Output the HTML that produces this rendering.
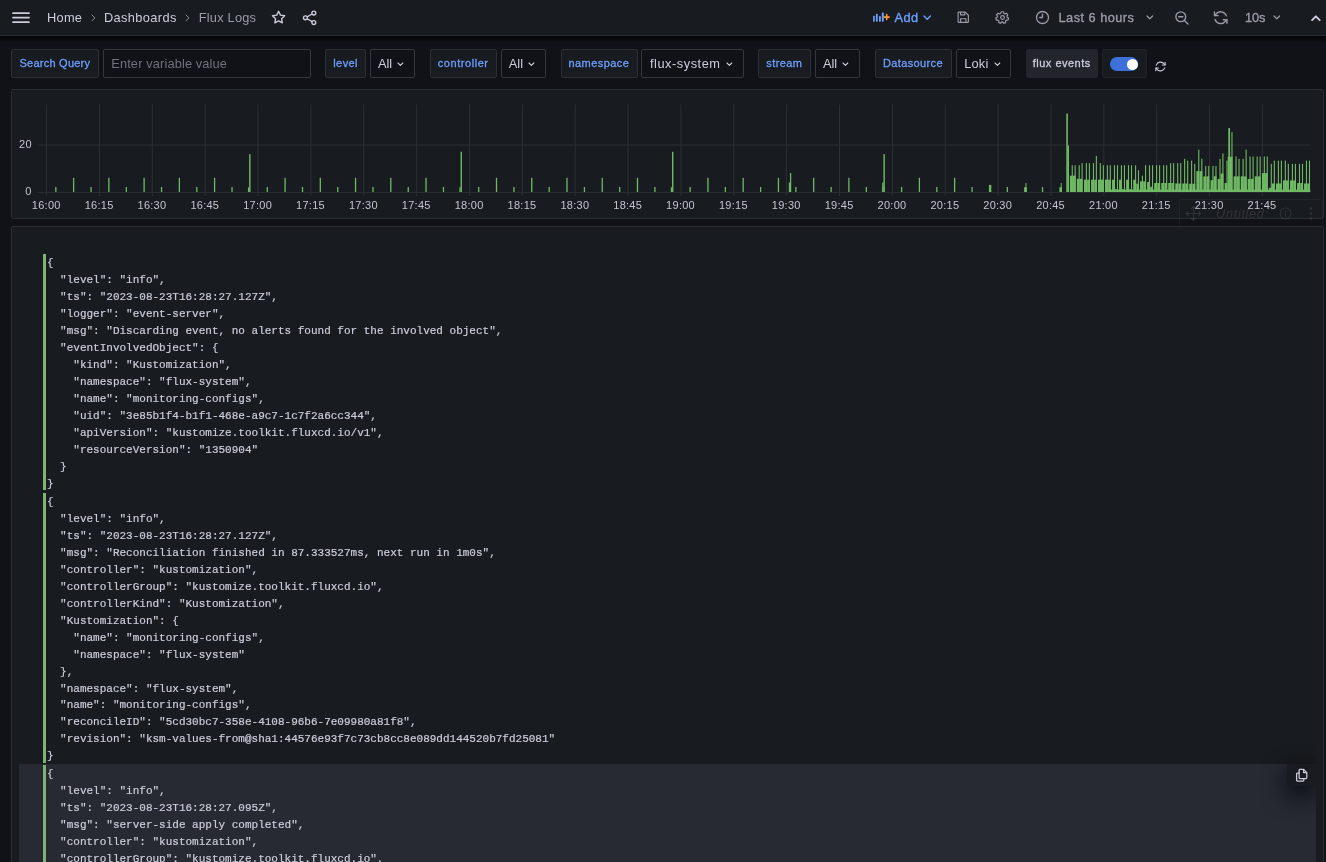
<!DOCTYPE html>
<html lang="en"><head><meta charset="utf-8"><title>Flux Logs - Dashboards - Grafana</title>
<style>
html,body{margin:0;padding:0}
body{width:1326px;height:862px;overflow:hidden;background:#111217;font-family:"Liberation Sans",sans-serif;color:#ccccdc;position:relative;font-size:12.6px;will-change:transform}
.t{position:absolute;white-space:pre;line-height:20px;height:20px}
.ic{position:absolute;overflow:visible}
.abs{position:absolute;box-sizing:border-box}
.topbar{left:0;top:0;width:1326px;height:36px;background:#181b1f;border-bottom:1px solid #2a2d33}
.lbl{background:#181b1f;border:1px solid #2c2f35;border-radius:2px}
.sel{background:#111217;border:1px solid #35373e;border-radius:2px}
.panel{background:#181b1f;border:1px solid #2a2d32;border-radius:2px}
.mono{font-family:"Liberation Mono",monospace;font-size:11px;line-height:16.96px;color:#ccccdc;white-space:pre;margin:0}
.row{position:absolute;left:19px;width:1297px;box-sizing:border-box}
.row .bar{position:absolute;left:24px;top:1px;bottom:1.5px;width:3px;background:#7eb56e}
.row pre{position:absolute;left:27.9px;-webkit-text-stroke:0.2px #ccccdc}
</style></head><body>

<header class="abs topbar">
<svg class="ic" style="left:12.00px;top:11.50px" width="18.00" height="11.00" viewBox="0 0 18 11" ><path d="M1 1.2H17M1 5.6H17M1 10H17" stroke="#ccccdc" stroke-width="1.750" stroke-linecap="round" fill="none"/></svg>
<span class="t " style="left:47.00px;top:7.60px;font-size:12.8px;color:#ccccdc;letter-spacing:0.285px;">Home</span>
<svg class="ic" style="left:91.15px;top:14.40px" width="4.90" height="7.80" viewBox="-1 -1 4.9 7.8"><path d="M0 0 L2.9 2.9 L0 5.8" fill="none" stroke="#8e8e9b" stroke-width="1.0" stroke-linecap="round" stroke-linejoin="round"/></svg>
<span class="t " style="left:104.00px;top:7.60px;font-size:12.8px;color:#ccccdc;letter-spacing:0.365px;">Dashboards</span>
<svg class="ic" style="left:185.25px;top:14.40px" width="4.90" height="7.80" viewBox="-1 -1 4.9 7.8"><path d="M0 0 L2.9 2.9 L0 5.8" fill="none" stroke="#8e8e9b" stroke-width="1.0" stroke-linecap="round" stroke-linejoin="round"/></svg>
<span class="t " style="left:198.70px;top:7.60px;font-size:12.8px;color:#9a9aa8;letter-spacing:0.226px;">Flux Logs</span>
<svg class="ic" style="left:270.15px;top:8.90px" width="17.20" height="17.20" viewBox="0 0 24 24" ><path d="M12 3.2l2.6 5.4 5.9.8-4.3 4.1 1 5.9-5.2-2.8-5.2 2.8 1-5.9L3.500 9.400l5.900-.8z" fill="none" stroke="#ccccdc" stroke-width="1.9" stroke-linejoin="round"/></svg>
<svg class="ic" style="left:301.30px;top:8.75px" width="17.60" height="17.60" viewBox="0 0 24 24" ><g fill="none" stroke="#ccccdc" stroke-width="1.9"><circle cx="17.5" cy="5.5" r="2.6"/><circle cx="6" cy="12" r="2.6"/><circle cx="17.500" cy="18.500" r="2.600"/><path d="M8.300 10.700L15.200 6.800M8.300 13.300L15.200 17.200"/></g></svg>
<svg class="ic" style="left:872.50px;top:12.20px" width="17.00" height="10.00" viewBox="0 0 17 10" ><g fill="#6e9fff"><rect x="0.100" y="3.700" width="1.700" height="6" rx=".6"/><rect x="2.900" y="1.800" width="1.800" height="7.900" rx=".6"/><rect x="6.000" y="4.100" width="1.800" height="5.600" rx=".6"/><rect x="8.800" y="0.500" width="2" height="9.200" rx=".6"/></g><path d="M13.700 2.600v5M11.200 5.100h5" stroke="#ff9830" stroke-width="1.600" stroke-linecap="round"/></svg>
<span class="t " style="left:894.40px;top:7.60px;font-size:12.8px;color:#6e9fff;letter-spacing:0.463px;-webkit-text-stroke:0.35px #6e9fff;">Add</span>
<svg class="ic" style="left:923.20px;top:15.00px" width="8.40" height="5.20" viewBox="-1 -1 8.4 5.2"><path d="M0 0 L3.2 3.2 L6.4 0" fill="none" stroke="#6e9fff" stroke-width="1.4" stroke-linecap="round" stroke-linejoin="round"/></svg>
<svg class="ic" style="left:955.80px;top:10.30px" width="14.50" height="14.50" viewBox="0 0 24 24" ><g fill="none" stroke="#9a9aa8" stroke-width="1.900" stroke-linejoin="round"><path d="M4.500 3.500h10.800l5.200 5.200v10.800a1 1 0 0 1-1 1h-15a1 1 0 0 1-1-1v-15a1 1 0 0 1 1-1z"/><path d="M7.500 3.500v4.500h7v-4.500M7.500 20.500v-6h9v6"/></g></svg>
<svg class="ic" style="left:995.00px;top:10.00px" width="15.00" height="15.00" viewBox="0 0 24 24" ><g fill="none" stroke="#9a9aa8" stroke-width="1.900" stroke-linejoin="round"><circle cx="12" cy="12" r="3"/><path d="M10.300 2.800h3.400l.5 2.600 1.700.9 2.400-1.200 2.200 2.600-1.500 2.100.4 1.900 2.300 1.300-.9 3.200-2.700-.1-1.300 1.400.3 2.700-3.200 1.100-1.500-2.200h-1.800l-1.500 2.200-3.200-1.100.3-2.700-1.300-1.400-2.700.1-.9-3.200 2.300-1.300.4-1.900-1.500-2.100 2.200-2.600 2.400 1.200 1.700-.9z"/></g></svg>
<svg class="ic" style="left:1035.00px;top:10.00px" width="15.00" height="15.00" viewBox="0 0 24 24" ><g fill="none" stroke="#9a9aa8" stroke-width="2.100" stroke-linecap="round" stroke-linejoin="round"><circle cx="12" cy="12" r="9.600"/><path d="M12 6.800V12H7.600"/></g></svg>
<span class="t " style="left:1058.50px;top:7.60px;font-size:12.8px;color:#9a9aa8;letter-spacing:0.460px;-webkit-text-stroke:0.35px #9a9aa8;">Last 6 hours</span>
<svg class="ic" style="left:1146.40px;top:15.20px" width="7.60" height="4.80" viewBox="-1 -1 7.6 4.8"><path d="M0 0 L2.8 2.8 L5.6 0" fill="none" stroke="#9a9aa8" stroke-width="1.2" stroke-linecap="round" stroke-linejoin="round"/></svg>
<svg class="ic" style="left:1173.60px;top:9.80px" width="15.50" height="15.50" viewBox="0 0 24 24" ><g fill="none" stroke="#9a9aa8" stroke-width="2.100" stroke-linecap="round"><circle cx="10.500" cy="10.500" r="7.600"/><path d="M7.200 10.500h6.600M16.200 16.200L21.600 21.600"/></g></svg>
<svg class="ic" style="left:1211.90px;top:8.80px" width="17.40" height="17.40" viewBox="0 0 24 24" ><g fill="none" stroke="#9a9aa8" stroke-width="1.900" stroke-linecap="round" stroke-linejoin="round"><path d="M19.800 9.500A8.300 8.300 0 0 0 5.300 7.200L3.600 9"/><path d="M3.400 4.200V9.200H8.400"/><path d="M4.200 14.500A8.300 8.300 0 0 0 18.700 16.800L20.400 15"/><path d="M20.600 19.800V14.800H15.600"/></g></svg>
<span class="t " style="left:1244.90px;top:7.60px;font-size:12.8px;color:#9a9aa8;letter-spacing:-0.069px;-webkit-text-stroke:0.35px #9a9aa8;">10s</span>
<svg class="ic" style="left:1273.40px;top:15.20px" width="7.60" height="4.80" viewBox="-1 -1 7.6 4.8"><path d="M0 0 L2.8 2.8 L5.6 0" fill="none" stroke="#9a9aa8" stroke-width="1.2" stroke-linecap="round" stroke-linejoin="round"/></svg>
<svg class="ic" style="left:1310px;top:14px" width="12" height="8" viewBox="0 0 12 8"><path d="M2.100 6.100L5.900 2.300L9.700 6.100" fill="none" stroke="#ccccdc" stroke-width="1.900" stroke-linecap="round" stroke-linejoin="round"/></svg>
</header>
<div class="abs" style="left:0;top:36px;width:1326px;height:7px;background:linear-gradient(180deg,rgba(0,0,0,.85) 0%,rgba(0,0,0,.45) 35%,rgba(0,0,0,0) 100%)"></div>
<div class="abs lbl" style="left:11px;top:49px;width:88px;height:29px"></div>
<span class="t " style="left:19.50px;top:53.30px;font-size:11px;color:#6e9fff;letter-spacing:0.240px;-webkit-text-stroke:0.3px #6e9fff;">Search Query</span>
<div class="abs sel" style="left:103px;top:49px;width:207.500px;height:29px"></div>
<span class="t " style="left:111.25px;top:53.60px;font-size:12.8px;color:#70717c;letter-spacing:0.138px;">Enter variable value</span>
<div class="abs lbl" style="left:325px;top:49px;width:40.5px;height:29px"></div>
<span class="t " style="left:333.25px;top:53.30px;font-size:11px;color:#6e9fff;letter-spacing:0.407px;-webkit-text-stroke:0.3px #6e9fff;">level</span>
<div class="abs sel" style="left:369.5px;top:49px;width:45.5px;height:29px"></div>
<span class="t " style="left:378.00px;top:53.60px;font-size:12.8px;color:#ccccdc;letter-spacing:-0.112px;">All</span>
<svg class="ic" style="left:397.30px;top:61.70px" width="6.80" height="4.40" viewBox="-1 -1 6.8 4.4"><path d="M0 0 L2.4 2.4 L4.8 0" fill="none" stroke="#ccccdc" stroke-width="1.1" stroke-linecap="round" stroke-linejoin="round"/></svg>
<div class="abs lbl" style="left:430px;top:49px;width:66.5px;height:29px"></div>
<span class="t " style="left:437.75px;top:53.30px;font-size:11px;color:#6e9fff;letter-spacing:0.557px;-webkit-text-stroke:0.3px #6e9fff;">controller</span>
<div class="abs sel" style="left:500.5px;top:49px;width:45.0px;height:29px"></div>
<span class="t " style="left:508.75px;top:53.60px;font-size:12.8px;color:#ccccdc;letter-spacing:0.013px;">All</span>
<svg class="ic" style="left:527.60px;top:61.70px" width="6.80" height="4.40" viewBox="-1 -1 6.8 4.4"><path d="M0 0 L2.4 2.4 L4.8 0" fill="none" stroke="#ccccdc" stroke-width="1.1" stroke-linecap="round" stroke-linejoin="round"/></svg>
<div class="abs lbl" style="left:561px;top:49px;width:77px;height:29px"></div>
<span class="t " style="left:568.50px;top:53.30px;font-size:11px;color:#6e9fff;letter-spacing:0.423px;-webkit-text-stroke:0.3px #6e9fff;">namespace</span>
<div class="abs sel" style="left:641px;top:49px;width:103px;height:29px"></div>
<span class="t " style="left:650.00px;top:53.60px;font-size:12.8px;color:#ccccdc;letter-spacing:0.528px;">flux-system</span>
<svg class="ic" style="left:726.00px;top:61.70px" width="6.80" height="4.40" viewBox="-1 -1 6.8 4.4"><path d="M0 0 L2.4 2.4 L4.8 0" fill="none" stroke="#ccccdc" stroke-width="1.1" stroke-linecap="round" stroke-linejoin="round"/></svg>
<div class="abs lbl" style="left:758px;top:49px;width:52.5px;height:29px"></div>
<span class="t " style="left:766.25px;top:53.30px;font-size:11px;color:#6e9fff;letter-spacing:0.427px;-webkit-text-stroke:0.3px #6e9fff;">stream</span>
<div class="abs sel" style="left:814.5px;top:49px;width:45.5px;height:29px"></div>
<span class="t " style="left:823.00px;top:53.60px;font-size:12.8px;color:#ccccdc;letter-spacing:-0.112px;">All</span>
<svg class="ic" style="left:842.10px;top:61.70px" width="6.80" height="4.40" viewBox="-1 -1 6.8 4.4"><path d="M0 0 L2.4 2.4 L4.8 0" fill="none" stroke="#ccccdc" stroke-width="1.1" stroke-linecap="round" stroke-linejoin="round"/></svg>
<div class="abs lbl" style="left:874.5px;top:49px;width:77.0px;height:29px"></div>
<span class="t " style="left:883.00px;top:53.30px;font-size:11px;color:#6e9fff;letter-spacing:0.361px;-webkit-text-stroke:0.3px #6e9fff;">Datasource</span>
<div class="abs sel" style="left:955.5px;top:49px;width:55.5px;height:29px"></div>
<span class="t " style="left:964.25px;top:53.60px;font-size:12.8px;color:#ccccdc;letter-spacing:0.173px;">Loki</span>
<svg class="ic" style="left:993.70px;top:61.70px" width="6.80" height="4.40" viewBox="-1 -1 6.8 4.4"><path d="M0 0 L2.4 2.4 L4.8 0" fill="none" stroke="#ccccdc" stroke-width="1.1" stroke-linecap="round" stroke-linejoin="round"/></svg>
<div class="abs" style="left:1026px;top:49px;width:72px;height:29px;background:#22252b;border-radius:2px"></div>
<span class="t " style="left:1032.75px;top:53.30px;font-size:11px;color:#ccccdc;letter-spacing:0.492px;-webkit-text-stroke:0.3px #ccccdc;">flux events</span>
<div class="abs" style="left:1102px;top:49px;width:44.500px;height:29px;background:#181b1f;border:1px solid #1f2227;border-radius:2px"></div>
<div class="abs" style="left:1109.500px;top:56.800px;width:28.800px;height:14.400px;border-radius:8px;background:#3d71d9"></div>
<div class="abs" style="left:1127px;top:58.500px;width:11px;height:11px;border-radius:50%;background:#fff"></div>
<svg class="ic" style="left:1153.70px;top:60.40px" width="13.00" height="13.00" viewBox="0 0 24 24" ><g transform="translate(24,0) scale(-1,1)" fill="none" stroke="#ccccdc" stroke-width="2" stroke-linecap="round" stroke-linejoin="round"><path d="M19.800 9.500A8.300 8.300 0 0 0 5.300 7.200L3.600 9"/><path d="M3.400 4.200V9.200H8.400"/><path d="M4.200 14.500A8.300 8.300 0 0 0 18.700 16.800L20.400 15"/><path d="M20.600 19.800V14.800H15.600"/></g></svg>
<section class="abs panel" style="left:11px;top:89px;width:1313px;height:130px"></section>
<svg class="ic" style="left:0;top:0" width="1326" height="230" viewBox="0 0 1326 230" shape-rendering="auto"><rect x="46.10" y="104.5" width="1" height="91.500" fill="#2c2f34"/><rect x="98.96" y="104.5" width="1" height="91.500" fill="#2c2f34"/><rect x="151.82" y="104.5" width="1" height="91.500" fill="#2c2f34"/><rect x="204.68" y="104.5" width="1" height="91.500" fill="#2c2f34"/><rect x="257.54" y="104.5" width="1" height="91.500" fill="#2c2f34"/><rect x="310.40" y="104.5" width="1" height="91.500" fill="#2c2f34"/><rect x="363.26" y="104.5" width="1" height="91.500" fill="#2c2f34"/><rect x="416.12" y="104.5" width="1" height="91.500" fill="#2c2f34"/><rect x="468.98" y="104.5" width="1" height="91.500" fill="#2c2f34"/><rect x="521.84" y="104.5" width="1" height="91.500" fill="#2c2f34"/><rect x="574.70" y="104.5" width="1" height="91.500" fill="#2c2f34"/><rect x="627.56" y="104.5" width="1" height="91.500" fill="#2c2f34"/><rect x="680.42" y="104.5" width="1" height="91.500" fill="#2c2f34"/><rect x="733.28" y="104.5" width="1" height="91.500" fill="#2c2f34"/><rect x="786.14" y="104.5" width="1" height="91.500" fill="#2c2f34"/><rect x="839.00" y="104.5" width="1" height="91.500" fill="#2c2f34"/><rect x="891.86" y="104.5" width="1" height="91.500" fill="#2c2f34"/><rect x="944.72" y="104.5" width="1" height="91.500" fill="#2c2f34"/><rect x="997.58" y="104.5" width="1" height="91.500" fill="#2c2f34"/><rect x="1050.44" y="104.5" width="1" height="91.500" fill="#2c2f34"/><rect x="1103.30" y="104.5" width="1" height="91.500" fill="#2c2f34"/><rect x="1156.16" y="104.5" width="1" height="91.500" fill="#2c2f34"/><rect x="1209.02" y="104.5" width="1" height="91.500" fill="#2c2f34"/><rect x="1261.88" y="104.5" width="1" height="91.500" fill="#2c2f34"/><rect x="37" y="191.90" width="1273" height="1" fill="#2c2f34"/><rect x="37" y="144.55" width="1273" height="1" fill="#2c2f34"/><g fill="#6fb965"><rect x="55.18" y="187.03" width="1.3" height="4.97"/><rect x="72.98" y="177.79" width="1.3" height="14.21"/><rect x="90.42" y="187.03" width="1.3" height="4.97"/><rect x="108.22" y="177.79" width="1.3" height="14.21"/><rect x="125.66" y="187.03" width="1.3" height="4.97"/><rect x="143.46" y="177.79" width="1.3" height="14.21"/><rect x="160.90" y="187.03" width="1.3" height="4.97"/><rect x="178.70" y="177.79" width="1.3" height="14.21"/><rect x="196.14" y="187.03" width="1.3" height="4.97"/><rect x="213.94" y="177.79" width="1.3" height="14.21"/><rect x="231.38" y="187.03" width="1.3" height="4.97"/><rect x="249.13" y="154.12" width="1.4" height="37.88"/><rect x="247.95" y="187.26" width="1.3" height="4.74"/><rect x="266.62" y="187.03" width="1.3" height="4.97"/><rect x="284.42" y="177.79" width="1.3" height="14.21"/><rect x="301.86" y="187.03" width="1.3" height="4.97"/><rect x="319.66" y="177.79" width="1.3" height="14.21"/><rect x="337.10" y="187.03" width="1.3" height="4.97"/><rect x="354.90" y="177.79" width="1.3" height="14.21"/><rect x="372.34" y="187.03" width="1.3" height="4.97"/><rect x="390.14" y="177.79" width="1.3" height="14.21"/><rect x="407.58" y="187.03" width="1.3" height="4.97"/><rect x="425.38" y="177.79" width="1.3" height="14.21"/><rect x="442.82" y="187.03" width="1.3" height="4.97"/><rect x="460.57" y="151.75" width="1.4" height="40.25"/><rect x="459.39" y="187.26" width="1.3" height="4.74"/><rect x="478.06" y="187.03" width="1.3" height="4.97"/><rect x="495.86" y="177.79" width="1.3" height="14.21"/><rect x="513.30" y="187.03" width="1.3" height="4.97"/><rect x="531.10" y="177.79" width="1.3" height="14.21"/><rect x="548.54" y="187.03" width="1.3" height="4.97"/><rect x="566.34" y="177.79" width="1.3" height="14.21"/><rect x="583.78" y="187.03" width="1.3" height="4.97"/><rect x="601.58" y="177.79" width="1.3" height="14.21"/><rect x="619.02" y="187.03" width="1.3" height="4.97"/><rect x="636.82" y="177.79" width="1.3" height="14.21"/><rect x="654.26" y="187.03" width="1.3" height="4.97"/><rect x="672.01" y="151.75" width="1.4" height="40.25"/><rect x="670.83" y="187.26" width="1.3" height="4.74"/><rect x="689.50" y="187.03" width="1.3" height="4.97"/><rect x="707.30" y="177.79" width="1.3" height="14.21"/><rect x="724.74" y="187.03" width="1.3" height="4.97"/><rect x="742.54" y="177.79" width="1.3" height="14.21"/><rect x="759.98" y="187.03" width="1.3" height="4.97"/><rect x="777.78" y="177.79" width="1.3" height="14.21"/><rect x="795.22" y="187.03" width="1.3" height="4.97"/><rect x="813.02" y="177.79" width="1.3" height="14.21"/><rect x="830.46" y="187.03" width="1.3" height="4.97"/><rect x="848.26" y="177.79" width="1.3" height="14.21"/><rect x="865.70" y="187.03" width="1.3" height="4.97"/><rect x="883.45" y="154.12" width="1.4" height="37.88"/><rect x="882.27" y="187.26" width="1.3" height="4.74"/><rect x="900.94" y="187.03" width="1.3" height="4.97"/><rect x="918.74" y="177.79" width="1.3" height="14.21"/><rect x="936.18" y="187.03" width="1.3" height="4.97"/><rect x="953.98" y="177.79" width="1.3" height="14.21"/><rect x="971.42" y="187.03" width="1.3" height="4.97"/><rect x="1006.66" y="187.03" width="1.3" height="4.97"/><rect x="1041.90" y="187.03" width="1.3" height="4.97"/><rect x="789.94" y="173.06" width="1.3" height="18.94"/><rect x="788.81" y="182.53" width="1.3" height="9.47"/><rect x="882.20" y="182.53" width="1.3" height="9.47"/><rect x="988.90" y="184.90" width="2.4" height="7.10"/><rect x="1024.10" y="187.26" width="2.8" height="4.74"/><rect x="1025.50" y="183.00" width="1.0" height="9.00"/><rect x="1059.40" y="187.26" width="2.6" height="4.74"/><rect x="1060.70" y="183.00" width="1.0" height="9.00"/><rect x="1066.30" y="113.52" width="1.6" height="78.48"/><rect x="1067.60" y="145.60" width="1.4" height="46.40"/><rect x="1071.69" y="165.25" width="1.1" height="26.75"/><rect x="1074.59" y="165.25" width="1.1" height="26.75"/><rect x="1078.65" y="165.25" width="1.1" height="26.75"/><rect x="1081.55" y="163.12" width="1.1" height="28.88"/><rect x="1085.84" y="163.12" width="1.1" height="28.88"/><rect x="1088.86" y="163.12" width="1.1" height="28.88"/><rect x="1092.92" y="163.12" width="1.1" height="28.88"/><rect x="1095.82" y="156.01" width="1.1" height="35.99"/><rect x="1099.77" y="163.12" width="1.1" height="28.88"/><rect x="1102.78" y="165.25" width="1.1" height="26.75"/><rect x="1106.84" y="165.25" width="1.1" height="26.75"/><rect x="1109.74" y="165.25" width="1.1" height="26.75"/><rect x="1113.92" y="165.25" width="1.1" height="26.75"/><rect x="1116.93" y="165.25" width="1.1" height="26.75"/><rect x="1120.88" y="165.25" width="1.1" height="26.75"/><rect x="1123.90" y="165.25" width="1.1" height="26.75"/><rect x="1127.96" y="165.25" width="1.1" height="26.75"/><rect x="1130.97" y="165.25" width="1.1" height="26.75"/><rect x="1135.03" y="165.25" width="1.1" height="26.75"/><rect x="1137.93" y="170.22" width="1.1" height="21.78"/><rect x="1141.88" y="175.66" width="1.1" height="16.34"/><rect x="1145.01" y="165.25" width="1.1" height="26.75"/><rect x="1148.95" y="165.25" width="1.1" height="26.75"/><rect x="1151.97" y="165.25" width="1.1" height="26.75"/><rect x="1156.03" y="165.25" width="1.1" height="26.75"/><rect x="1159.05" y="165.25" width="1.1" height="26.75"/><rect x="1163.11" y="165.25" width="1.1" height="26.75"/><rect x="1166.12" y="165.25" width="1.1" height="26.75"/><rect x="1170.07" y="163.12" width="1.1" height="28.88"/><rect x="1173.08" y="163.12" width="1.1" height="28.88"/><rect x="1177.14" y="163.12" width="1.1" height="28.88"/><rect x="1180.16" y="163.12" width="1.1" height="28.88"/><rect x="1184.09" y="158.85" width="1.1" height="33.15"/><rect x="1187.11" y="160.63" width="1.1" height="31.37"/><rect x="1191.05" y="160.63" width="1.1" height="31.37"/><rect x="1194.18" y="163.83" width="1.1" height="28.17"/><rect x="1198.24" y="149.62" width="1.1" height="42.38"/><rect x="1201.26" y="158.85" width="1.1" height="33.15"/><rect x="1205.20" y="165.96" width="1.1" height="26.04"/><rect x="1208.22" y="165.96" width="1.1" height="26.04"/><rect x="1212.40" y="165.96" width="1.1" height="26.04"/><rect x="1215.41" y="165.96" width="1.1" height="26.04"/><rect x="1219.47" y="158.85" width="1.1" height="33.15"/><rect x="1222.37" y="153.41" width="1.1" height="38.59"/><rect x="1226.43" y="160.63" width="1.1" height="31.37"/><rect x="1231.42" y="132.10" width="1.1" height="59.90"/><rect x="1235.48" y="156.49" width="1.1" height="35.51"/><rect x="1238.50" y="158.85" width="1.1" height="33.15"/><rect x="1242.56" y="158.85" width="1.1" height="33.15"/><rect x="1245.58" y="149.62" width="1.1" height="42.38"/><rect x="1249.52" y="156.49" width="1.1" height="35.51"/><rect x="1252.54" y="156.49" width="1.1" height="35.51"/><rect x="1256.60" y="156.49" width="1.1" height="35.51"/><rect x="1259.61" y="156.49" width="1.1" height="35.51"/><rect x="1263.79" y="156.49" width="1.1" height="35.51"/><rect x="1266.69" y="156.49" width="1.1" height="35.51"/><rect x="1270.75" y="163.83" width="1.1" height="28.17"/><rect x="1273.77" y="160.63" width="1.1" height="31.37"/><rect x="1277.83" y="160.63" width="1.1" height="31.37"/><rect x="1280.84" y="160.63" width="1.1" height="31.37"/><rect x="1284.79" y="160.63" width="1.1" height="31.37"/><rect x="1287.80" y="163.83" width="1.1" height="28.17"/><rect x="1291.86" y="163.83" width="1.1" height="28.17"/><rect x="1294.88" y="163.83" width="1.1" height="28.17"/><rect x="1298.94" y="163.83" width="1.1" height="28.17"/><rect x="1301.96" y="163.83" width="1.1" height="28.17"/><rect x="1305.90" y="160.63" width="1.1" height="31.37"/><rect x="1308.92" y="160.63" width="1.1" height="31.37"/><rect x="1228.29" y="128.08" width="1.8" height="63.92"/><rect x="1069.84" y="175.66" width="2.95" height="16.34"/><rect x="1072.94" y="175.66" width="2.75" height="16.34"/><rect x="1076.80" y="178.74" width="2.95" height="13.26"/><rect x="1079.90" y="178.74" width="2.75" height="13.26"/><rect x="1083.99" y="179.69" width="2.95" height="12.31"/><rect x="1087.09" y="179.69" width="2.87" height="12.31"/><rect x="1091.07" y="179.69" width="2.95" height="12.31"/><rect x="1094.17" y="179.69" width="2.75" height="12.31"/><rect x="1097.92" y="179.69" width="2.95" height="12.31"/><rect x="1101.02" y="179.69" width="2.87" height="12.31"/><rect x="1104.99" y="179.69" width="2.95" height="12.31"/><rect x="1108.09" y="179.69" width="2.75" height="12.31"/><rect x="1112.07" y="179.69" width="2.95" height="12.31"/><rect x="1115.17" y="189.16" width="2.87" height="2.84"/><rect x="1119.03" y="179.69" width="2.95" height="12.31"/><rect x="1122.13" y="189.16" width="2.87" height="2.84"/><rect x="1126.11" y="179.69" width="2.95" height="12.31"/><rect x="1129.21" y="189.16" width="2.87" height="2.84"/><rect x="1133.18" y="179.69" width="2.95" height="12.31"/><rect x="1136.28" y="183.71" width="2.75" height="8.29"/><rect x="1140.03" y="181.35" width="2.95" height="10.65"/><rect x="1143.16" y="181.35" width="2.95" height="10.65"/><rect x="1147.10" y="182.06" width="2.95" height="9.94"/><rect x="1150.20" y="186.79" width="2.87" height="5.21"/><rect x="1154.18" y="183.00" width="2.95" height="9.00"/><rect x="1157.28" y="183.00" width="2.87" height="9.00"/><rect x="1161.26" y="183.00" width="2.95" height="9.00"/><rect x="1164.36" y="183.00" width="2.87" height="9.00"/><rect x="1168.22" y="183.00" width="2.95" height="9.00"/><rect x="1171.32" y="183.00" width="2.87" height="9.00"/><rect x="1175.29" y="183.48" width="2.95" height="8.52"/><rect x="1178.39" y="183.48" width="2.87" height="8.52"/><rect x="1182.24" y="183.48" width="2.95" height="8.52"/><rect x="1185.34" y="183.48" width="2.87" height="8.52"/><rect x="1189.20" y="183.71" width="2.95" height="8.29"/><rect x="1192.33" y="183.71" width="2.95" height="8.29"/><rect x="1196.39" y="171.17" width="2.95" height="20.83"/><rect x="1199.49" y="171.17" width="2.87" height="20.83"/><rect x="1203.35" y="176.37" width="2.95" height="15.63"/><rect x="1206.45" y="176.37" width="2.87" height="15.63"/><rect x="1210.55" y="180.16" width="2.95" height="11.84"/><rect x="1213.65" y="176.37" width="2.87" height="15.63"/><rect x="1217.62" y="178.98" width="2.95" height="13.02"/><rect x="1220.72" y="173.53" width="2.75" height="18.47"/><rect x="1224.58" y="183.00" width="2.95" height="9.00"/><rect x="1227.68" y="156.72" width="2.05" height="35.28"/><rect x="1229.89" y="156.72" width="2.63" height="35.28"/><rect x="1233.63" y="176.37" width="2.95" height="15.63"/><rect x="1236.73" y="176.37" width="2.87" height="15.63"/><rect x="1240.71" y="176.37" width="2.95" height="15.63"/><rect x="1243.81" y="176.37" width="2.87" height="15.63"/><rect x="1247.67" y="178.98" width="2.95" height="13.02"/><rect x="1250.77" y="178.98" width="2.87" height="13.02"/><rect x="1254.75" y="176.37" width="2.95" height="15.63"/><rect x="1257.85" y="176.37" width="2.87" height="15.63"/><rect x="1261.94" y="173.06" width="2.95" height="18.94"/><rect x="1265.04" y="173.06" width="2.75" height="18.94"/><rect x="1268.90" y="187.74" width="2.95" height="4.26"/><rect x="1272.00" y="183.48" width="2.87" height="8.52"/><rect x="1275.98" y="183.48" width="2.95" height="8.52"/><rect x="1279.08" y="183.48" width="2.87" height="8.52"/><rect x="1282.94" y="180.40" width="2.95" height="11.60"/><rect x="1286.04" y="180.40" width="2.87" height="11.60"/><rect x="1290.01" y="180.40" width="2.95" height="11.60"/><rect x="1293.11" y="180.40" width="2.87" height="11.60"/><rect x="1297.09" y="183.00" width="2.95" height="9.00"/><rect x="1300.19" y="183.00" width="2.87" height="9.00"/><rect x="1304.05" y="183.48" width="2.95" height="8.52"/><rect x="1307.15" y="183.48" width="2.87" height="8.52"/><rect x="1106.00" y="189.63" width="204.30" height="2.37"/></g></svg>
<span class="t " style="left:19.00px;top:133.60px;font-size:11px;color:#c4c4d2;letter-spacing:0.266px;">20</span>
<span class="t " style="left:25.30px;top:181.20px;font-size:11px;color:#c4c4d2;letter-spacing:0.083px;">0</span>
<span class="t " style="left:31.80px;top:194.90px;font-size:11px;color:#c4c4d2;letter-spacing:0.269px;">16:00</span>
<span class="t " style="left:84.66px;top:194.90px;font-size:11px;color:#c4c4d2;letter-spacing:0.269px;">16:15</span>
<span class="t " style="left:137.52px;top:194.90px;font-size:11px;color:#c4c4d2;letter-spacing:0.269px;">16:30</span>
<span class="t " style="left:190.38px;top:194.90px;font-size:11px;color:#c4c4d2;letter-spacing:0.269px;">16:45</span>
<span class="t " style="left:243.24px;top:194.90px;font-size:11px;color:#c4c4d2;letter-spacing:0.269px;">17:00</span>
<span class="t " style="left:296.10px;top:194.90px;font-size:11px;color:#c4c4d2;letter-spacing:0.269px;">17:15</span>
<span class="t " style="left:348.96px;top:194.90px;font-size:11px;color:#c4c4d2;letter-spacing:0.269px;">17:30</span>
<span class="t " style="left:401.82px;top:194.90px;font-size:11px;color:#c4c4d2;letter-spacing:0.269px;">17:45</span>
<span class="t " style="left:454.68px;top:194.90px;font-size:11px;color:#c4c4d2;letter-spacing:0.269px;">18:00</span>
<span class="t " style="left:507.54px;top:194.90px;font-size:11px;color:#c4c4d2;letter-spacing:0.269px;">18:15</span>
<span class="t " style="left:560.40px;top:194.90px;font-size:11px;color:#c4c4d2;letter-spacing:0.269px;">18:30</span>
<span class="t " style="left:613.26px;top:194.90px;font-size:11px;color:#c4c4d2;letter-spacing:0.269px;">18:45</span>
<span class="t " style="left:666.12px;top:194.90px;font-size:11px;color:#c4c4d2;letter-spacing:0.269px;">19:00</span>
<span class="t " style="left:718.98px;top:194.90px;font-size:11px;color:#c4c4d2;letter-spacing:0.269px;">19:15</span>
<span class="t " style="left:771.84px;top:194.90px;font-size:11px;color:#c4c4d2;letter-spacing:0.269px;">19:30</span>
<span class="t " style="left:824.70px;top:194.90px;font-size:11px;color:#c4c4d2;letter-spacing:0.269px;">19:45</span>
<span class="t " style="left:877.56px;top:194.90px;font-size:11px;color:#c4c4d2;letter-spacing:0.269px;">20:00</span>
<span class="t " style="left:930.42px;top:194.90px;font-size:11px;color:#c4c4d2;letter-spacing:0.269px;">20:15</span>
<span class="t " style="left:983.28px;top:194.90px;font-size:11px;color:#c4c4d2;letter-spacing:0.269px;">20:30</span>
<span class="t " style="left:1036.14px;top:194.90px;font-size:11px;color:#c4c4d2;letter-spacing:0.269px;">20:45</span>
<span class="t " style="left:1089.00px;top:194.90px;font-size:11px;color:#c4c4d2;letter-spacing:0.269px;">21:00</span>
<span class="t " style="left:1141.86px;top:194.90px;font-size:11px;color:#c4c4d2;letter-spacing:0.269px;">21:15</span>
<span class="t " style="left:1194.72px;top:194.90px;font-size:11px;color:#c4c4d2;letter-spacing:0.269px;">21:30</span>
<span class="t " style="left:1247.58px;top:194.90px;font-size:11px;color:#c4c4d2;letter-spacing:0.269px;">21:45</span>
<div class="abs" style="left:1179px;top:199px;width:144px;height:29px;border:1px solid rgba(204,204,220,0.05);border-radius:3px"></div>
<svg class="ic" style="left:1185px;top:205px;opacity:.13" width="17" height="17" viewBox="0 0 24 24"><path d="M12 2v20M2 12h20M9 5l3-3 3 3M9 19l3 3 3-3M5 9l-3 3 3 3M19 9l3 3-3 3" fill="none" stroke="#ccccdc" stroke-width="1.600" stroke-linecap="round" stroke-linejoin="round"/></svg>
<span class="t " style="left:1216.00px;top:203.50px;font-size:12.8px;color:rgba(204,204,220,0.13);letter-spacing:0.657px;font-style:italic;">Untitled</span>
<svg class="ic" style="left:1279px;top:206.500px;opacity:.13" width="13" height="13" viewBox="0 0 24 24"><circle cx="12" cy="12" r="10" fill="none" stroke="#ccccdc" stroke-width="2"/><path d="M12 11v6M12 7.500v.5" stroke="#ccccdc" stroke-width="2" stroke-linecap="round"/></svg>
<svg class="ic" style="left:1309px;top:207px;opacity:.13" width="4" height="13" viewBox="0 0 4 13"><circle cx="2" cy="1.500" r="1.200" fill="#ccccdc"/><circle cx="2" cy="6.500" r="1.200" fill="#ccccdc"/><circle cx="2" cy="11.500" r="1.200" fill="#ccccdc"/></svg>
<section class="abs panel" style="left:11px;top:226px;width:1313px;height:660px;border-bottom-left-radius:0;border-bottom-right-radius:0"></section>
<div class="row" style="top:253.00px;height:238.50px;"><div class="bar"></div><pre class="mono" style="top:2.12px">{
  "level": "info",
  "ts": "2023-08-23T16:28:27.127Z",
  "logger": "event-server",
  "msg": "Discarding event, no alerts found for the involved object",
  "eventInvolvedObject": {
    "kind": "Kustomization",
    "namespace": "flux-system",
    "name": "monitoring-configs",
    "uid": "3e85b1f4-b1f1-468e-a9c7-1c7f2a6cc344",
    "apiVersion": "kustomize.toolkit.fluxcd.io/v1",
    "resourceVersion": "1350904"
  }
}</pre></div>
<div class="row" style="top:491.50px;height:272.50px;"><div class="bar"></div><pre class="mono" style="top:2.52px">{
  "level": "info",
  "ts": "2023-08-23T16:28:27.127Z",
  "msg": "Reconciliation finished in 87.333527ms, next run in 1m0s",
  "controller": "kustomization",
  "controllerGroup": "kustomize.toolkit.fluxcd.io",
  "controllerKind": "Kustomization",
  "Kustomization": {
    "name": "monitoring-configs",
    "namespace": "flux-system"
  },
  "namespace": "flux-system",
  "name": "monitoring-configs",
  "reconcileID": "5cd30bc7-358e-4108-96b6-7e09980a81f8",
  "revision": "ksm-values-from@sha1:44576e93f7c73cb8cc8e089dd144520b7fd25081"
}</pre></div>
<div class="row" style="top:764.00px;height:136.00px;background:#272a32;"><div class="bar"></div><pre class="mono" style="top:2.02px">{
  "level": "info",
  "ts": "2023-08-23T16:28:27.095Z",
  "msg": "server-side apply completed",
  "controller": "kustomization",
  "controllerGroup": "kustomize.toolkit.fluxcd.io",
  "controllerKind": "Kustomization",
  "Kustomization": {
    "name": "monitoring-configs",
    "namespace": "flux-system"
  },</pre></div>
<div class="abs" style="left:1180px;top:700px;width:136px;height:162px;overflow:hidden;pointer-events:none"><div class="abs" style="left:107px;top:64px;width:29px;height:22px;background:#181b1f;border-radius:2px;box-shadow:0 8px 24px rgb(1,4,9)"></div></div>
<svg class="ic" style="left:1294px;top:767px" width="16" height="16" viewBox="0 0 16 16"><g fill="none" stroke="#ccccdc" stroke-width="1.250" stroke-linejoin="round" stroke-linecap="round"><path d="M5.900 2.400h3.700l3.200 3.200v5.100a.8.8 0 0 1-.8.800h-6.100a.8.8 0 0 1-.8-.8v-7.500a.8.8 0 0 1 .8-.8z"/><path d="M9.600 2.600v3h3"/><path d="M5.100 6.200h-1.700a.8.8 0 0 0-.8.800v6.300a.8.8 0 0 0 .8.800h5.600a.8.8 0 0 0 .8-.8v-1.700"/></g></svg>
</body></html>
